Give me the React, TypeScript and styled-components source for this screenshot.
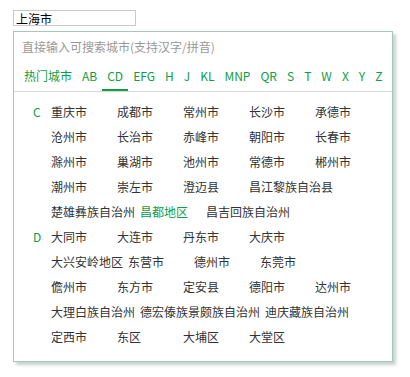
import styled, { createGlobalStyle } from 'styled-components';

const GlobalStyle = createGlobalStyle`
    body {
        margin: 0;
        background: #fff;
        font-family: "Noto Sans CJK SC", "Noto Sans", sans-serif;
    }
`;

const green = '#0f9d45';

const Page = styled.div`
    padding: 10px 13px;
`;

const CityInput = styled.input`
    display: block;
    box-sizing: border-box;
    width: 123px;
    height: 16px;
    margin: 0;
    padding: 0 2px;
    border: 1px solid #c9c9c9;
    font-family: inherit;
    font-size: 12px;
    line-height: 14px;
    color: #000;
    outline: none;
`;

const Panel = styled.div`
    box-sizing: border-box;
    width: 380px;
    height: 331px;
    margin-top: 5px;
    border: 1px solid #a9c6bc;
    background: #fff;
    box-shadow: 3px 3px 3px rgba(130, 155, 145, 0.45);
`;

const SearchBox = styled.input`
    display: block;
    box-sizing: border-box;
    width: 100%;
    height: 20px;
    margin: 5px 0 0;
    padding: 0 8px;
    border: none;
    outline: none;
    font-family: inherit;
    font-size: 12px;
    line-height: 20px;
    color: #333;
    background: transparent;
    &::placeholder {
        color: #999;
    }
`;

const Tabs = styled.div`
    display: flex;
    margin-top: 9px;
    padding-left: 5px;
    border-bottom: 1px solid #d6dcd9;
`;

const Tab = styled.div<{ $active?: boolean }>`
    padding: 0 5px 3px;
    font-size: 12px;
    line-height: 20px;
    color: ${green};
    border-bottom: 2px solid ${(p) => (p.$active ? green : 'transparent')};
    cursor: pointer;
`;

const List = styled.div`
    padding: 7px 10px 0 0;
`;

const Group = styled.div`
    display: flex;
`;

const Letter = styled.div`
    flex: 0 0 37px;
    box-sizing: border-box;
    padding-left: 19px;
    font-size: 12px;
    line-height: 25px;
    color: ${green};
`;

const Cities = styled.div`
    flex: 1;
    display: flex;
    flex-wrap: wrap;
    column-gap: 5px;
`;

const City = styled.span<{ $hover?: boolean }>`
    min-width: 61px;
    font-size: 12px;
    line-height: 25px;
    white-space: nowrap;
    color: ${(p) => (p.$hover ? green : '#333')};
    cursor: pointer;
`;

const tabs = ['热门城市', 'AB', 'CD', 'EFG', 'H', 'J', 'KL', 'MNP', 'QR', 'S', 'T', 'W', 'X', 'Y', 'Z'];

const groups = [
    {
        letter: 'C',
        cities: [
            '重庆市', '成都市', '常州市', '长沙市', '承德市',
            '沧州市', '长治市', '赤峰市', '朝阳市', '长春市',
            '滁州市', '巢湖市', '池州市', '常德市', '郴州市',
            '潮州市', '崇左市', '澄迈县', '昌江黎族自治县',
            '楚雄彝族自治州', '昌都地区', '昌吉回族自治州',
        ],
    },
    {
        letter: 'D',
        cities: [
            '大同市', '大连市', '丹东市', '大庆市',
            '大兴安岭地区', '东营市', '德州市', '东莞市',
            '儋州市', '东方市', '定安县', '德阳市', '达州市',
            '大理白族自治州', '德宏傣族景颇族自治州', '迪庆藏族自治州',
            '定西市', '东区', '大埔区', '大堂区',
        ],
    },
];

const App = () => {
    return (
        <Page>
            <GlobalStyle />
            <CityInput defaultValue="上海市" />
            <Panel>
                <SearchBox placeholder="直接输入可搜索城市(支持汉字/拼音)" />
                <Tabs>
                    {tabs.map((t) => (
                        <Tab key={t} $active={t === 'CD'}>
                            {t}
                        </Tab>
                    ))}
                </Tabs>
                <List>
                    {groups.map((g) => (
                        <Group key={g.letter}>
                            <Letter>{g.letter}</Letter>
                            <Cities>
                                {g.cities.map((c) => (
                                    <City key={c} $hover={c === '昌都地区'}>
                                        {c}
                                    </City>
                                ))}
                            </Cities>
                        </Group>
                    ))}
                </List>
            </Panel>
        </Page>
    );
};

export default App;
